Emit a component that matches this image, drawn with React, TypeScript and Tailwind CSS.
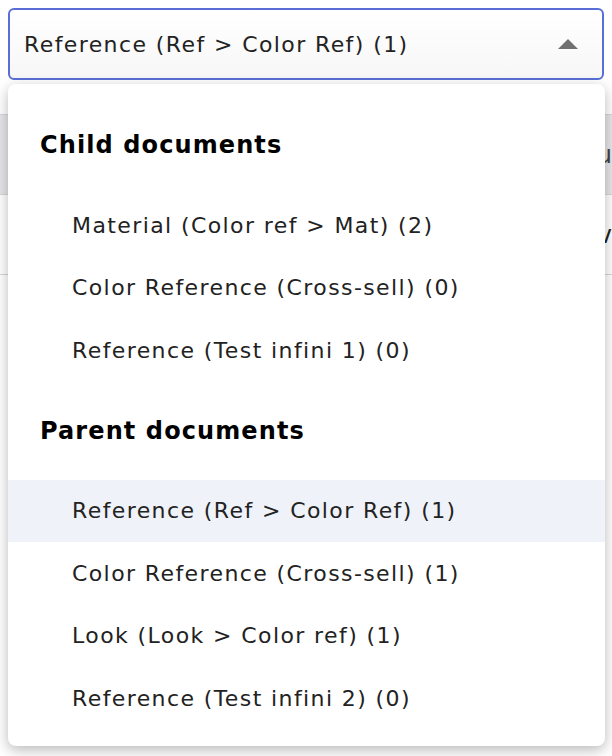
import React from 'react';

interface DocItem {
  id: string;
  label: string;
  active?: boolean;
}

const childDocs: DocItem[] = [
  { id: 'c1', label: 'Material (Color ref > Mat) (2)' },
  { id: 'c2', label: 'Color Reference (Cross-sell) (0)' },
  { id: 'c3', label: 'Reference (Test infini 1) (0)' },
];

const parentDocs: DocItem[] = [
  { id: 'p1', label: 'Reference (Ref > Color Ref) (1)', active: true },
  { id: 'p2', label: 'Color Reference (Cross-sell) (1)' },
  { id: 'p3', label: 'Look (Look > Color ref) (1)' },
  { id: 'p4', label: 'Reference (Test infini 2) (0)' },
];

const Section = ({ title, items }: { title: string; items: DocItem[] }) => (
  <div>
    <div className="h-[98px] flex items-center pl-8 text-[24px] font-semibold tracking-[1.1px] text-black">{title}</div>
    {items.map(item => (
      <div
        key={item.id}
        className={`h-[62.5px] flex items-center pl-16 text-[22px] tracking-[1.4px] text-[#222222] ${item.active ? 'bg-[#eff2f9]' : ''}`}
      >
        {item.label}
      </div>
    ))}
  </div>
);

export default function App() {
  return (
    <div className="relative w-[612px] h-[756px] overflow-hidden bg-white font-['DejaVu_Sans',sans-serif]">
      {/* select */}
      <div className="p-2">
        <div className="h-[72px] rounded-md border-2 border-[#5a6fd6] bg-gradient-to-b from-white to-[#f7f7f7] flex items-center justify-between pl-[14px] pr-[24px]">
          <span className="text-[22px] tracking-[1.4px] text-[#222222]">Reference (Ref &gt; Color Ref) (1)</span>
          <svg width="20" height="10" viewBox="0 0 20 10">
            <path d="M10 0 L20 10 L0 10 Z" fill="#707070" />
          </svg>
        </div>
      </div>

      {/* page content behind the menu */}
      <div className="mt-[26px]">
        <div className="h-[80px] border-t border-[#d6d6da] bg-[#e6e6ea] flex items-center justify-end text-[24px] text-[#444]">u</div>
        <div className="h-[80px] border-t border-[#d6d6da] flex items-center justify-end text-[24px] text-[#222]">v</div>
        <div className="border-t border-[#d6d6da]" />
      </div>

      {/* dropdown menu */}
      <div className="absolute left-2 top-[84px] w-[597px] rounded-lg bg-white pt-3 pb-4 shadow-[0_4px_14px_rgba(0,0,0,0.28)]">
        <Section title="Child documents" items={childDocs} />
        <Section title="Parent documents" items={parentDocs} />
      </div>
    </div>
  );
}
